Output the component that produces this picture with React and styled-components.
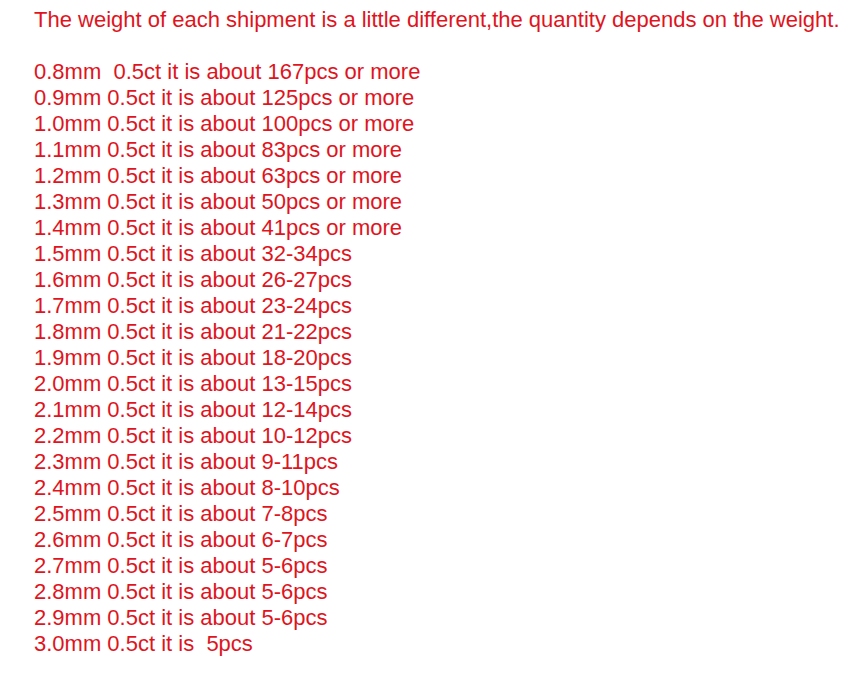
import React from 'react';
import styled, { createGlobalStyle } from 'styled-components';

const GlobalStyle = createGlobalStyle`
  html, body {
    margin: 0;
    padding: 0;
    background: #ffffff;
  }
`;

const Page = styled.div`
  padding: 7px 0 0 34px;
  font-family: "Liberation Sans", Arial, sans-serif;
  font-size: 22px;
  line-height: 26px;
  color: #e0141d;
`;

const Line = styled.div`
  white-space: pre;
  min-height: 26px;
`;

const rows = [
  '0.8mm  0.5ct it is about 167pcs or more',
  '0.9mm 0.5ct it is about 125pcs or more',
  '1.0mm 0.5ct it is about 100pcs or more',
  '1.1mm 0.5ct it is about 83pcs or more',
  '1.2mm 0.5ct it is about 63pcs or more',
  '1.3mm 0.5ct it is about 50pcs or more',
  '1.4mm 0.5ct it is about 41pcs or more',
  '1.5mm 0.5ct it is about 32-34pcs',
  '1.6mm 0.5ct it is about 26-27pcs',
  '1.7mm 0.5ct it is about 23-24pcs',
  '1.8mm 0.5ct it is about 21-22pcs',
  '1.9mm 0.5ct it is about 18-20pcs',
  '2.0mm 0.5ct it is about 13-15pcs',
  '2.1mm 0.5ct it is about 12-14pcs',
  '2.2mm 0.5ct it is about 10-12pcs',
  '2.3mm 0.5ct it is about 9-11pcs',
  '2.4mm 0.5ct it is about 8-10pcs',
  '2.5mm 0.5ct it is about 7-8pcs',
  '2.6mm 0.5ct it is about 6-7pcs',
  '2.7mm 0.5ct it is about 5-6pcs',
  '2.8mm 0.5ct it is about 5-6pcs',
  '2.9mm 0.5ct it is about 5-6pcs',
  '3.0mm 0.5ct it is  5pcs',
];

const App = () => (
  <>
    <GlobalStyle />
    <Page>
      <Line>The weight of each shipment is a little different,the quantity depends on the weight.</Line>
      <Line />
      {rows.map((r) => <Line key={r}>{r}</Line>)}
    </Page>
  </>
);

export default App;
